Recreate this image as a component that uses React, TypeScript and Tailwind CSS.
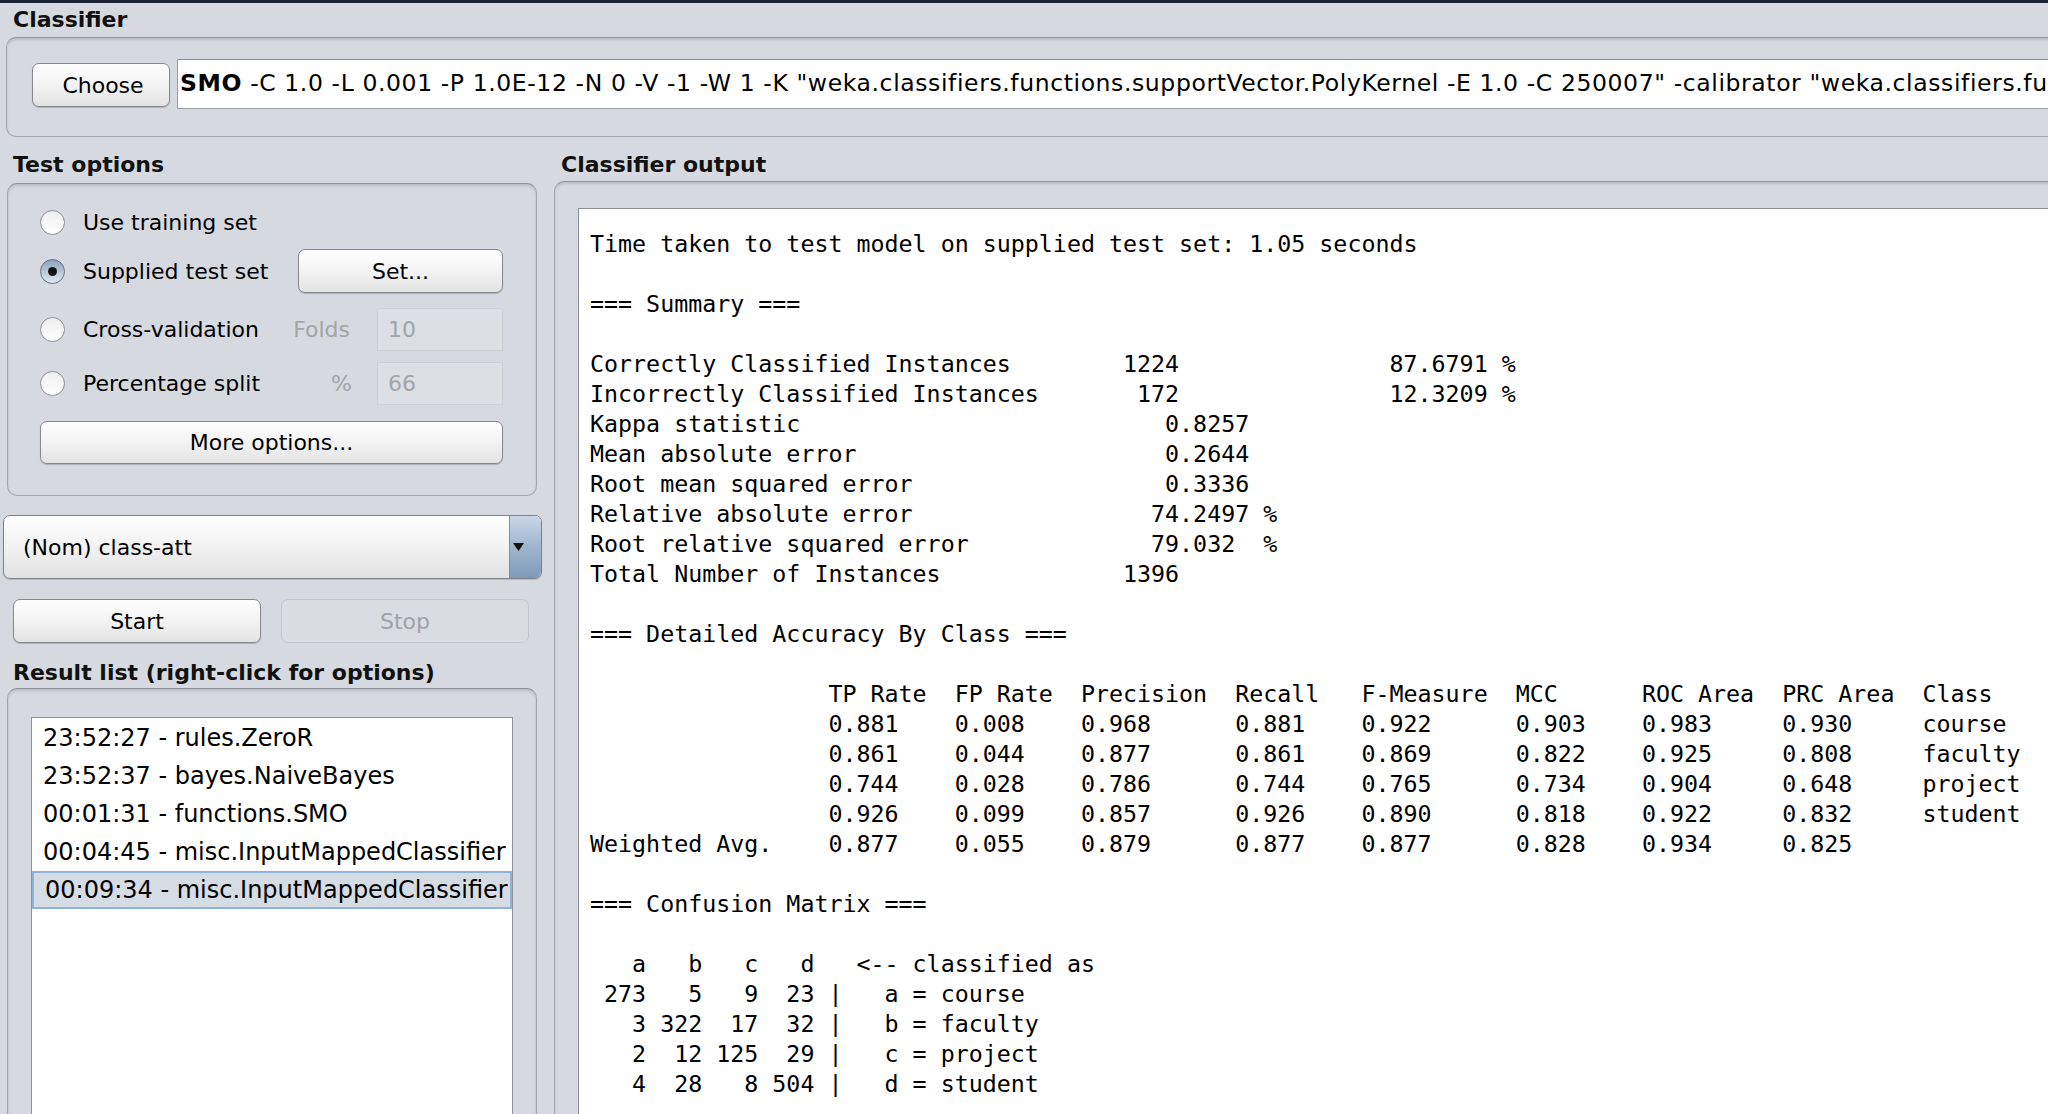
import React from 'react';

// panel with the recessed aqua-style titled border
const boxClass =
  'rounded-[10px] border border-[#a3a6ab] border-t-[#8f9297] shadow-[inset_0_2px_3px_rgba(0,0,0,0.13)]';

const Radio = ({ checked }: { checked?: boolean }) => (
  <span
    className={
      'flex h-[25px] w-[25px] shrink-0 items-center justify-center rounded-full border ' +
      (checked
        ? 'border-[#5f7085] bg-linear-to-b from-[#8ea3ba] to-[#e3eaf2]'
        : 'border-[#8f9196] bg-linear-to-b from-[#eeeeee] to-[#ffffff]')
    }
  >
    {checked && <span className="h-[9px] w-[9px] rounded-full bg-[#141414]" />}
  </span>
);

const Button = ({
  label,
  className,
  disabled,
}: {
  label: string;
  className: string;
  disabled?: boolean;
}) => (
  <div
    className={
      'flex items-center justify-center rounded-[7px] border text-[22px] ' +
      (disabled
        ? 'border-[#c3c6cb] bg-[#d9dce1] text-[#a0a2a6]'
        : 'border-[#85888d] bg-linear-to-b from-[#ffffff] via-[#f3f3f3] to-[#e3e3e3] text-black shadow-[0_1px_1px_rgba(0,0,0,0.18)]') +
      ' ' +
      className
    }
  >
    {label}
  </div>
);

const output = [
  'Time taken to test model on supplied test set: 1.05 seconds',
  '',
  '=== Summary ===',
  '',
  'Correctly Classified Instances        1224               87.6791 %',
  'Incorrectly Classified Instances       172               12.3209 %',
  'Kappa statistic                          0.8257',
  'Mean absolute error                      0.2644',
  'Root mean squared error                  0.3336',
  'Relative absolute error                 74.2497 %',
  'Root relative squared error             79.032  %',
  'Total Number of Instances             1396     ',
  '',
  '=== Detailed Accuracy By Class ===',
  '',
  '                 TP Rate  FP Rate  Precision  Recall   F-Measure  MCC      ROC Area  PRC Area  Class',
  '                 0.881    0.008    0.968      0.881    0.922      0.903    0.983     0.930     course',
  '                 0.861    0.044    0.877      0.861    0.869      0.822    0.925     0.808     faculty',
  '                 0.744    0.028    0.786      0.744    0.765      0.734    0.904     0.648     project',
  '                 0.926    0.099    0.857      0.926    0.890      0.818    0.922     0.832     student',
  'Weighted Avg.    0.877    0.055    0.879      0.877    0.877      0.828    0.934     0.825     ',
  '',
  '=== Confusion Matrix ===',
  '',
  '   a   b   c   d   <-- classified as',
  ' 273   5   9  23 |   a = course',
  '   3 322  17  32 |   b = faculty',
  '   2  12 125  29 |   c = project',
  '   4  28   8 504 |   d = student',
].join('\n');

const results = [
  '23:52:27 - rules.ZeroR',
  '23:52:37 - bayes.NaiveBayes',
  '00:01:31 - functions.SMO',
  '00:04:45 - misc.InputMappedClassifier',
  '00:09:34 - misc.InputMappedClassifier',
];

const Title = ({ text, className }: { text: string; className?: string }) => (
  <div className={'text-[22px] font-bold leading-[24px] text-[#111] ' + (className ?? '')}>
    {text}
  </div>
);

export default function App() {
  return (
    <div className="h-[1114px] w-[2048px] overflow-hidden bg-[#d6d9df] font-['DejaVu_Sans',sans-serif] text-black">
      <div className="h-[3px] bg-[#1c2333]" />

      {/* Classifier */}
      <Title text="Classifier" className="pl-[13px] pt-[5px] pb-[5px]" />
      <div className={'ml-[6px] mr-[-40px] flex h-[100px] items-start pl-[25px] pt-[21px] ' + boxClass}>
        <Button label="Choose" className="mt-[4px] h-[44px] w-[138px] shrink-0 pl-[4px]" />
        <div className="ml-[7px] flex h-[50px] flex-1 items-center overflow-hidden whitespace-nowrap border border-[#9a9c9f] border-t-[#8a8c90] bg-white pl-[2px] text-[23.5px] tracking-[0.6px]">
          <span className="font-bold">SMO</span>
          &nbsp;-C 1.0 -L 0.001 -P 1.0E-12 -N 0 -V -1 -W 1 -K "weka.classifiers.functions.supportVector.PolyKernel -E 1.0 -C 250007" -calibrator "weka.classifiers.functions.Logistic -R 1.0E-8 -M -1"
        </div>
      </div>

      <div className="flex">
        {/* left column */}
        <div className="flex w-[543px] shrink-0 flex-col">
          <Title text="Test options" className="pl-[13px] pt-[16px] pb-[6px]" />
          <div className={'ml-[7px] w-[530px] pl-[32px] pr-[33px] pt-[18px] pb-[31px] text-[22px] ' + boxClass}>
            <div className="flex h-[40px] items-center gap-[18px]">
              <Radio />
              <span>Use training set</span>
            </div>
            <div className="mt-[7px] flex h-[44px] items-center gap-[18px]">
              <Radio checked />
              <span>Supplied test set</span>
              <Button label="Set..." className="ml-auto h-[44px] w-[205px]" />
            </div>
            <div className="mt-[15px] flex h-[43px] items-center gap-[18px]">
              <Radio />
              <span>Cross-validation</span>
              <span className="ml-auto mr-[9px] text-[#a3a5a9]">Folds</span>
              <div className="flex h-[43px] w-[126px] items-center border border-[#cdd0d4] bg-[#dcdfe3] pl-[10px] text-[#a3a5a9]">
                10
              </div>
            </div>
            <div className="mt-[11px] flex h-[43px] items-center gap-[18px]">
              <Radio />
              <span>Percentage split</span>
              <span className="ml-auto mr-[7px] text-[#a3a5a9]">%</span>
              <div className="flex h-[43px] w-[126px] items-center border border-[#cdd0d4] bg-[#dcdfe3] pl-[10px] text-[#a3a5a9]">
                66
              </div>
            </div>
            <Button label="More options..." className="mt-[16px] h-[43px] w-full" />
          </div>

          {/* class attribute combo */}
          <div className="ml-[3px] mt-[19px] flex h-[64px] w-[539px] overflow-hidden rounded-[7px] border border-[#7f8287] bg-linear-to-b from-[#ffffff] via-[#f2f2f2] to-[#e1e1e1] shadow-[0_1px_1px_rgba(0,0,0,0.15)]">
            <div className="flex flex-1 items-center pl-[19px] text-[22px]">(Nom) class-att</div>
            <div className="flex w-[32px] items-center border-l border-[#7d8ea3] bg-linear-to-b from-[#c9d7e6] via-[#9fb5cd] to-[#7f9bb9] pl-[3px]">
              <svg width="11" height="8" viewBox="0 0 11 8">
                <path d="M0 0 L11 0 L5.5 8 Z" fill="#111" />
              </svg>
            </div>
          </div>

          <div className="ml-[13px] mt-[20px] flex gap-[20px]">
            <Button label="Start" className="h-[44px] w-[248px]" />
            <Button label="Stop" disabled className="h-[44px] w-[248px]" />
          </div>

          <Title text="Result list (right-click for options)" className="pl-[13px] pt-[18px] pb-[3px]" />
          <div className={'ml-[7px] h-[500px] w-[530px] pl-[23px] pt-[28px] ' + boxClass}>
            <div className="h-[500px] w-[482px] border border-[#8f9195] bg-white pt-[1px] text-[24px]">
              {results.map((r, i) => (
                <div
                  key={i}
                  className={
                    'flex h-[38px] items-center whitespace-nowrap pl-[11px] ' +
                    (i === 4 ? 'border-2 border-[#8fb2d9] bg-[#d6dce4] pl-[9px]' : '')
                  }
                >
                  {r}
                </div>
              ))}
            </div>
          </div>
        </div>

        {/* right column: output */}
        <div className="ml-[11px] flex flex-1 flex-col">
          <Title text="Classifier output" className="pl-[7px] pt-[16px] pb-[4px]" />
          <div className={'mr-[-40px] h-[1000px] pl-[23px] pt-[26px] ' + boxClass}>
            <pre className="h-[1000px] border border-[#8c8e92] bg-white pl-[11px] pt-[20px] font-['DejaVu_Sans_Mono',monospace] text-[23.3px] leading-[30px] text-black">
              {output}
            </pre>
          </div>
        </div>
      </div>
    </div>
  );
}
